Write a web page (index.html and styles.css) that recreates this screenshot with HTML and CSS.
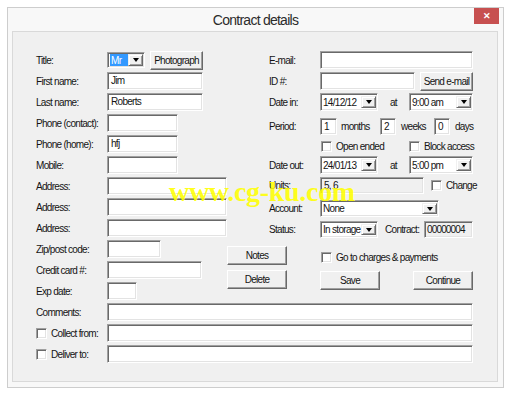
FILE: index.html
```html
<!DOCTYPE html>
<html>
<head>
<meta charset="utf-8">
<link rel="stylesheet" href="styles.css">
</head>
<body>
<div class="window">
  <div class="titlebar">Contract details<span class="close">✕</span></div>
  <div class="panel">
    <div class="top">
      <div class="left">
        <div class="row"><span class="lbl">Title:</span><span class="select w38"><span class="val"><span class="hl">Mr</span></span><span class="arrow"></span></span><button class="btn w53 ml5">Photograph</button></div>
        <div class="row"><span class="lbl">First name:</span><span class="field w96">Jim</span></div>
        <div class="row"><span class="lbl">Last name:</span><span class="field w96">Roberts</span></div>
        <div class="row"><span class="lbl">Phone (contact):</span><span class="field w71"></span></div>
        <div class="row"><span class="lbl">Phone (home):</span><span class="field w71">hfj</span></div>
        <div class="row"><span class="lbl">Mobile:</span><span class="field w71"></span></div>
        <div class="row"><span class="lbl">Address:</span><span class="field w120"></span></div>
        <div class="row"><span class="lbl">Address:</span><span class="field w120"></span></div>
        <div class="row"><span class="lbl">Address:</span><span class="field w120"></span></div>
        <div class="row"><span class="lbl">Zip/post code:</span><span class="field w54"></span></div>
        <div class="row"><span class="lbl">Credit card #:</span><span class="field w95"></span></div>
        <div class="row"><span class="lbl">Exp date:</span><span class="field w30"></span></div>
      </div>
      <div class="mid">
        <button class="btn w60">Notes</button>
        <button class="btn w60">Delete</button>
      </div>
      <div class="right">
        <div class="row"><span class="rlbl">E-mail:</span><span class="field w153"></span></div>
        <div class="row mt3"><span class="rlbl">ID #:</span><span class="field w95"></span><button class="btn w53 ml5">Send e-mail</button></div>
        <div class="row mt3"><span class="rlbl">Date in:</span><span class="select w58"><span class="val">14/12/12</span><span class="arrow"></span></span><span class="at">at</span><span class="select w64"><span class="val">9:00 am</span><span class="arrow"></span></span></div>
        <div class="row mt7 h17"><span class="rlbl">Period:</span><span class="field w17">1</span><span class="unit w43">months</span><span class="field w16">2</span><span class="unit w38">weeks</span><span class="field w16">0</span><span class="unit">days</span></div>
        <div class="row mt5 h12"><span class="rlbl"></span><span class="check w88"><span class="cb"></span>Open ended</span><span class="check"><span class="cb"></span>Block access</span></div>
        <div class="row mt4"><span class="rlbl">Date out:</span><span class="select w58"><span class="val">24/01/13</span><span class="arrow"></span></span><span class="at">at</span><span class="select w64"><span class="val">5:00 pm</span><span class="arrow"></span></span></div>
        <div class="row mt3 h17"><span class="rlbl">Units:</span><span class="field ro w104 topv">5, 6</span><span class="check ml6"><span class="cb"></span>Change</span></div>
        <div class="row mt6 h17"><span class="rlbl">Account:</span><span class="select w119"><span class="val">None</span><span class="arrow"></span></span></div>
        <div class="row mt4 h17"><span class="rlbl">Status:</span><span class="select w58"><span class="val">In storage</span><span class="arrow"></span></span><span class="unit w46">Contract:</span><span class="field ro w49 topv tight">00000004</span></div>
        <div class="row mt13 h12"><span class="rlbl"></span><span class="check"><span class="cb"></span>Go to charges &amp; payments</span></div>
        <div class="row mt8 h19"><span class="rlbl"></span><button class="btn w60">Save</button><button class="btn w60 ml33">Continue</button></div>
      </div>
    </div>
    <div class="bottom">
      <div class="row"><span class="lbl">Comments:</span><span class="field w366"></span></div>
      <div class="row"><span class="lbl check"><span class="cb"></span>Collect from:</span><span class="field w366"></span></div>
      <div class="row"><span class="lbl check"><span class="cb"></span>Deliver to:</span><span class="field w366"></span></div>
    </div>
  </div>
  <div class="watermark">www.cg-ku.com</div>
</div>
</body>
</html>
```
FILE: styles.css
```css
* { box-sizing: border-box; }
body {
  margin: 0;
  background: #ffffff;
  font-family: "Liberation Sans", Arial, sans-serif;
  font-size: 10px;
  letter-spacing: -0.7px;
  color: #141414;
}
.window {
  position: relative;
  margin: 7px 0 0 7px;
  width: 497px;
  height: 381px;
  border: 1px solid #cdcdcd;
  background: #f8f8f8;
  display: flex;
  flex-direction: column;
}
.titlebar {
  position: relative;
  height: 23px;
  flex: none;
  display: flex;
  align-items: center;
  justify-content: center;
  font-size: 14px;
  letter-spacing: -0.75px;
  color: #2b2b2b;
  padding-top: 1px;
}
.close {
  position: absolute;
  right: 4px;
  top: 0;
  width: 25px;
  height: 16px;
  background: #c75050;
  color: #fff;
  font-size: 9px;
  letter-spacing: 0;
  display: flex;
  align-items: center;
  justify-content: center;
  font-weight: bold;
}
.panel {
  flex: 1;
  margin: 0 5px 5px 4px;
  border: 1px solid #d9d9d9;
  background: #f0f0f0;
  padding: 19px 0 0 23px;
}
.top {
  display: grid;
  grid-template-columns: 191px 42px 18px 186px;
}
.left {
  grid-column: 1;
  grid-row: 1;
  display: flex;
  flex-direction: column;
  gap: 3px;
}
.mid {
  grid-column: 2 / 4;
  grid-row: 1;
  display: flex;
  flex-direction: column;
  justify-content: flex-end;
  gap: 5px;
  padding-bottom: 11px;
}
.right {
  grid-column: 3 / 5;
  grid-row: 1;
  display: flex;
  flex-direction: column;
}
.bottom {
  margin-top: 3px;
  display: flex;
  flex-direction: column;
  gap: 3px;
}
.row {
  display: flex;
  align-items: center;
  height: 18px;
  white-space: nowrap;
}
.h17 { height: 17px; }
.h12 { height: 12px; }
.h19 { height: 19px; }
.lbl { width: 71px; flex: none; }
.rlbl { width: 51px; flex: none; }
.field {
  height: 18px;
  background: #fff;
  border: 1px solid;
  border-color: #a0a0a0 #ffffff #ffffff #a0a0a0;
  box-shadow: inset 1px 1px 0 #696969, inset -1px -1px 0 #e3e3e3;
  padding: 0 0 1px 3px;
  display: flex;
  align-items: center;
  flex: none;
  overflow: hidden;
}
.h17 .field { height: 17px; }
.field.ro { background: #f0f0f0; }
.field.topv { align-items: flex-start; padding-top: 2px; }
.field.tight { padding-left: 2px; padding-right: 0; letter-spacing: -0.85px; }
.select {
  height: 18px;
  background: #fff;
  border: 1px solid;
  border-color: #a0a0a0 #ffffff #ffffff #a0a0a0;
  box-shadow: inset 1px 1px 0 #696969, inset -1px -1px 0 #e3e3e3;
  padding: 2px 1px 2px 1px;
  display: flex;
  flex: none;
}
.left .select { height: 16px; padding: 1px 1px 1px 2px; }
.h17 .select { height: 17px; }
.val {
  flex: 1;
  display: flex;
  align-items: center;
  padding-left: 1px;
  overflow: hidden;
}
.hl {
  background: #3399ff;
  color: #fff;
  height: 100%;
  width: 19px;
  display: flex;
  align-items: center;
  padding-left: 1px;
}
.arrow {
  width: 15px;
  flex: none;
  background: #f0f0f0;
  border: 1px solid;
  border-color: #f0f0f0 #696969 #696969 #f0f0f0;
  box-shadow: inset 1px 1px 0 #fff, inset -1px -1px 0 #a0a0a0;
  display: flex;
  align-items: center;
  justify-content: center;
}
.arrow::after {
  content: "";
  border-left: 3.5px solid transparent;
  border-right: 3.5px solid transparent;
  border-top: 4px solid #000;
}
.btn {
  height: 19px;
  background: #f0f0f0;
  border: 1px solid;
  border-color: #ffffff #696969 #696969 #ffffff;
  box-shadow: inset -1px -1px 0 #a0a0a0;
  font: inherit;
  letter-spacing: inherit;
  color: #141414;
  padding: 0;
  display: flex;
  align-items: center;
  justify-content: center;
  flex: none;
}
.cb {
  width: 11px;
  height: 11px;
  flex: none;
  background: #fff;
  border: 1px solid;
  border-color: #a0a0a0 #ffffff #ffffff #a0a0a0;
  box-shadow: inset 1px 1px 0 #696969, inset -1px -1px 0 #e3e3e3;
  margin: 0 4px 0 1px;
}
.check { display: flex; align-items: center; }
.lbl.check .cb { margin-left: 0; }
.at { width: 31px; padding-left: 12px; flex: none; }
.unit { flex: none; padding-left: 5px; }
.w43 { width: 43px; padding-left: 4px; }
.w38 { width: 38px; }
.w46 { width: 46px; padding-left: 7px; }
.w16 { width: 16px; }
.w17 { width: 17px; }
.w30 { width: 30px; }
.w49 { width: 49px; }
.w53 { width: 53px; }
.w54 { width: 54px; }
.w58 { width: 58px; }
.w60 { width: 60px; }
.w64 { width: 64px; }
.w71 { width: 71px; }
.w88 { width: 88px; flex: none; }
.w95 { width: 95px; }
.w96 { width: 96px; }
.w104 { width: 104px; }
.w119 { width: 119px; }
.w120 { width: 120px; }
.w153 { width: 153px; }
.w366 { width: 366px; }
.select.w38 { width: 38px; padding-left: 1px; }
.ml5 { margin-left: 5px; }
.ml6 { margin-left: 6px; }
.ml33 { margin-left: 33px; }
.mt3 { margin-top: 3px; }
.mt4 { margin-top: 4px; }
.mt5 { margin-top: 5px; }
.mt6 { margin-top: 6px; }
.mt7 { margin-top: 7px; }
.mt8 { margin-top: 8px; }
.mt13 { margin-top: 13px; }
.watermark {
  position: absolute;
  left: 161px;
  top: 170px;
  font-family: "Liberation Serif", "Times New Roman", serif;
  font-size: 28px;
  font-weight: bold;
  line-height: 28px;
  letter-spacing: -0.3px;
  color: rgba(255, 255, 0, 0.9);
  pointer-events: none;
}
```
